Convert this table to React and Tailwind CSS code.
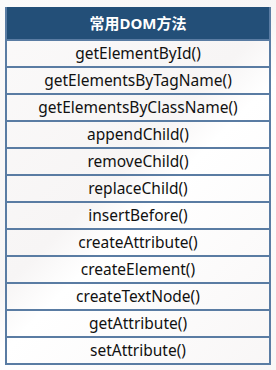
const methods = [
  'getElementById()',
  'getElementsByTagName()',
  'getElementsByClassName()',
  'appendChild()',
  'removeChild()',
  'replaceChild()',
  'insertBefore()',
  'createAttribute()',
  'createElement()',
  'createTextNode()',
  'getAttribute()',
  'setAttribute()',
];

export default function App() {
  return (
    <div className="w-[276px] h-[370px] bg-[linear-gradient(135deg,#fbfafa_0%,#f7f5f5_45%,#ffffff_55%,#f8f6f6_100%)] pt-[7px] pl-[5px]">
      <div className="w-[266px] border-x-2 border-b-2 border-[#5a7ca3]" style={{ fontFamily: '"Noto Sans", "Noto Sans CJK SC", sans-serif' }}>
        <div className="h-[32px] bg-[#234f78] flex items-center justify-center text-white font-bold text-[15px]">
          常用DOM方法
        </div>
        {methods.map((m) => (
          <div
            key={m}
            className="h-[27px] border-t-2 border-[#5a7ca3] flex items-center justify-center text-[15.5px] text-[#111]"
          >
            {m}
          </div>
        ))}
      </div>
    </div>
  );
}
